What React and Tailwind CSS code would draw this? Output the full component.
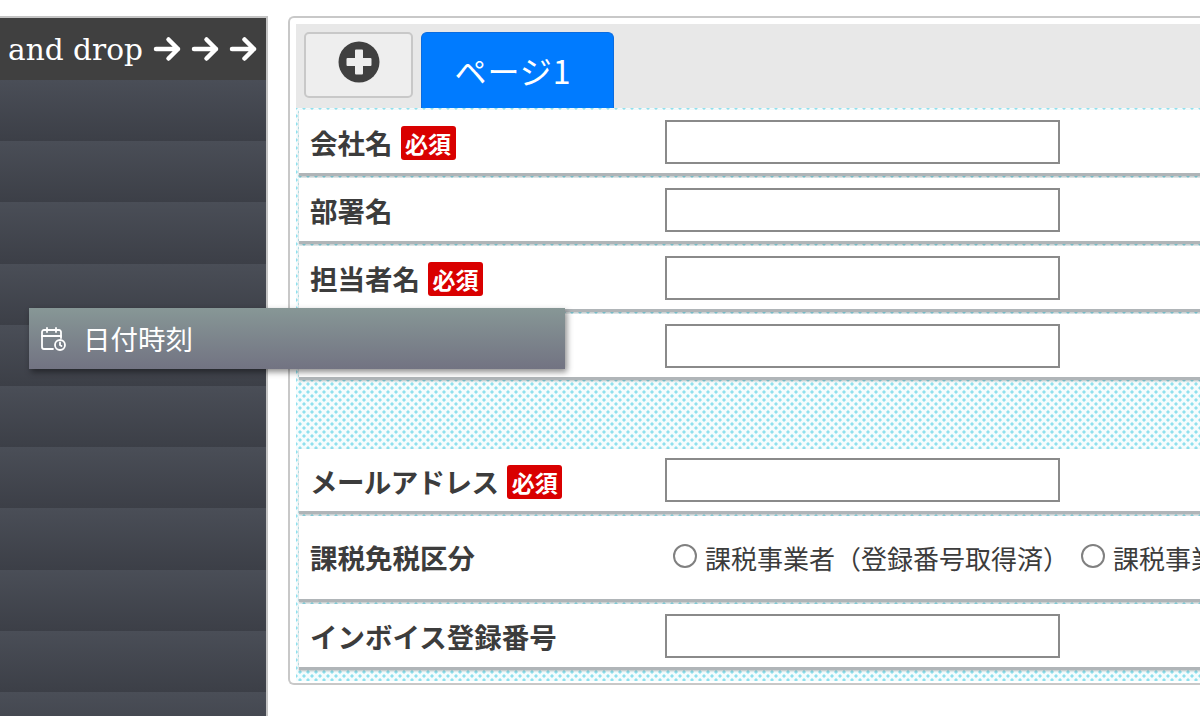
import React from "react";

const Arrow = () => (
  <svg width="29" height="26" viewBox="0 0 29 26" fill="none" stroke="#ffffff" strokeWidth="4.5" strokeLinecap="round" strokeLinejoin="round">
    <path d="M3 13h22M15.500 3.500 25 13l-9.500 9.500" />
  </svg>
);

const DateTimeIcon = () => (
  <svg width="25" height="24" viewBox="0 0 25 24" fill="none" stroke="#ffffff" strokeWidth="1.8" strokeLinecap="round" strokeLinejoin="round">
    <path d="M20 11V5a2 2 0 0 0-2-2H3a2 2 0 0 0-2 2v15a2 2 0 0 0 2 2h9" />
    <path d="M6 1v4M15 1v4M1 9h19" />
    <circle cx="19" cy="18" r="5" />
    <path d="M19 15.500V18l1.500 1" />
  </svg>
);

const Field = ({ label, required, h = "h-[66px]", labelClass = "" }) => (
  <div className={`flex items-center bg-white ml-[3px] ${h} border-b-[3px] border-[#b0b5b8] shadow-[0_1px_2px_rgba(0,0,0,0.25)]`}>
    <div className="w-[366px] pl-[11px] pt-[3px] flex items-center shrink-0">
      <span className={`text-[27.5px] font-bold text-[#3c3c3c] leading-none ${labelClass}`}>{label}</span>
      {required && (
        <span className="ml-[9px] w-[55px] h-[34px] rounded-[3px] bg-[#d90000] text-white text-[23px] font-bold leading-[34px] text-center">
          必須
        </span>
      )}
    </div>
    <div className="w-[395px] h-[44px] border-2 border-[#8a8a8a] bg-white shrink-0" />
  </div>
);

const Radio = ({ label, className }) => (
  <label className={`flex items-center shrink-0 ${className}`}>
    <span className="w-[24px] h-[24px] mb-[4px] rounded-full border-2 border-[#808080] bg-white shrink-0" />
    <span className="ml-[8px] text-[26px] text-[#3c3c3c] leading-none whitespace-nowrap">{label}</span>
  </label>
);

const App = () => {
  return (
    <div className="w-[1200px] h-[716px] overflow-hidden bg-white flex font-['Noto_Sans_CJK_JP','Noto_Sans',sans-serif]">
      {/* sidebar */}
      <div className="w-[268px] shrink-0 mt-4 border-t-2 border-r-2 border-[#c4c4c4]">
        <div className="h-[62px] bg-[#404040] text-white flex items-center pl-[8px] whitespace-nowrap font-['DejaVu_Serif',serif] text-[29.6px] leading-none">
          <span className="pt-[3px]">and drop</span>
          <div className="flex ml-[10px] gap-[9px]">
            <Arrow />
            <Arrow />
            <Arrow />
          </div>
        </div>
        {Array.from({ length: 11 }).map((_, i) => (
          <div key={i} className="h-[61.2px] bg-gradient-to-b from-[#4a4e57] to-[#3c3f47]" />
        ))}
      </div>

      {/* drag ghost */}
      <div className="absolute left-[29px] top-[308px] w-[536px] h-[61px] bg-gradient-to-b from-[#879796] to-[#727382] shadow-[2px_3px_6px_rgba(0,0,0,0.45)] flex items-center pl-[12px] text-white">
        <DateTimeIcon />
        <span className="ml-[17px] text-[27.5px] leading-none">日付時刻</span>
      </div>

      {/* form */}
      <div className="ml-5 mt-4 w-[1000px] h-[669px] border-2 border-r-0 border-[#c8c8c8] rounded-[6px] p-[6px] pr-0 shrink-0">
        <div className="h-[84px] bg-[#e8e8e8] flex items-start pl-[8px] pt-[8px] gap-[8px]">
          <div className="w-[109px] h-[66px] rounded-[5px] border-2 border-[#c8c8c8] bg-[#eeeeee] flex justify-center pt-[7px]">
            <svg width="42" height="42" viewBox="0 0 42 42">
              <circle cx="21" cy="21" r="20.5" fill="#404040" />
              <path d="M18 8.500h6a1 1 0 0 1 1 1V17h7.500a1 1 0 0 1 1 1v6a1 1 0 0 1-1 1H25v7.500a1 1 0 0 1-1 1h-6a1 1 0 0 1-1-1V25H9.500a1 1 0 0 1-1-1v-6a1 1 0 0 1 1-1H17V9.500a1 1 0 0 1 1-1z" fill="#eeeeee" />
            </svg>
          </div>
          <div className="w-[193px] h-[76px] rounded-t-[6px] border border-b-0 border-[#0a6ce0] bg-[#007bff] text-white text-[32px] tracking-[1px] flex items-center justify-center leading-none pb-[2px] pr-[9px]">
            ページ1
          </div>
        </div>
        <div className="h-[573px] bg-[radial-gradient(#8fe0ee_1.2px,transparent_2px),radial-gradient(#8fe0ee_1.2px,transparent_2px)] bg-[length:8px_8px] bg-[position:0_0,4px_4px] bg-[#f5fcfd]">
          <div className="flex flex-col pt-[2px] gap-[2px]">
            <Field label="会社名" required labelClass="mr-[-1px]" />
            <Field label="部署名" />
            <Field label="担当者名" required labelClass="mr-[-1px]" />
            <Field label="" />
          </div>
          <div className="h-[69px]" />
          <div className="flex flex-col gap-[2px]">
            <Field label="メールアドレス" required h="h-[65px]" labelClass="tracking-[-0.6px]" />
            <div className="flex items-center bg-white ml-[3px] h-[86px] border-b-[3px] border-[#b0b5b8] shadow-[0_1px_2px_rgba(0,0,0,0.25)]">
              <div className="w-[374px] pl-[11px] text-[27.5px] font-bold text-[#3c3c3c] leading-none shrink-0">課税免税区分</div>
              <Radio label="課税事業者（登録番号取得済）" />
              <Radio label="課税事業者" className="ml-[12px]" />
            </div>
            <Field label="インボイス登録番号" />
          </div>
        </div>
      </div>
    </div>
  );
};

export default App;
